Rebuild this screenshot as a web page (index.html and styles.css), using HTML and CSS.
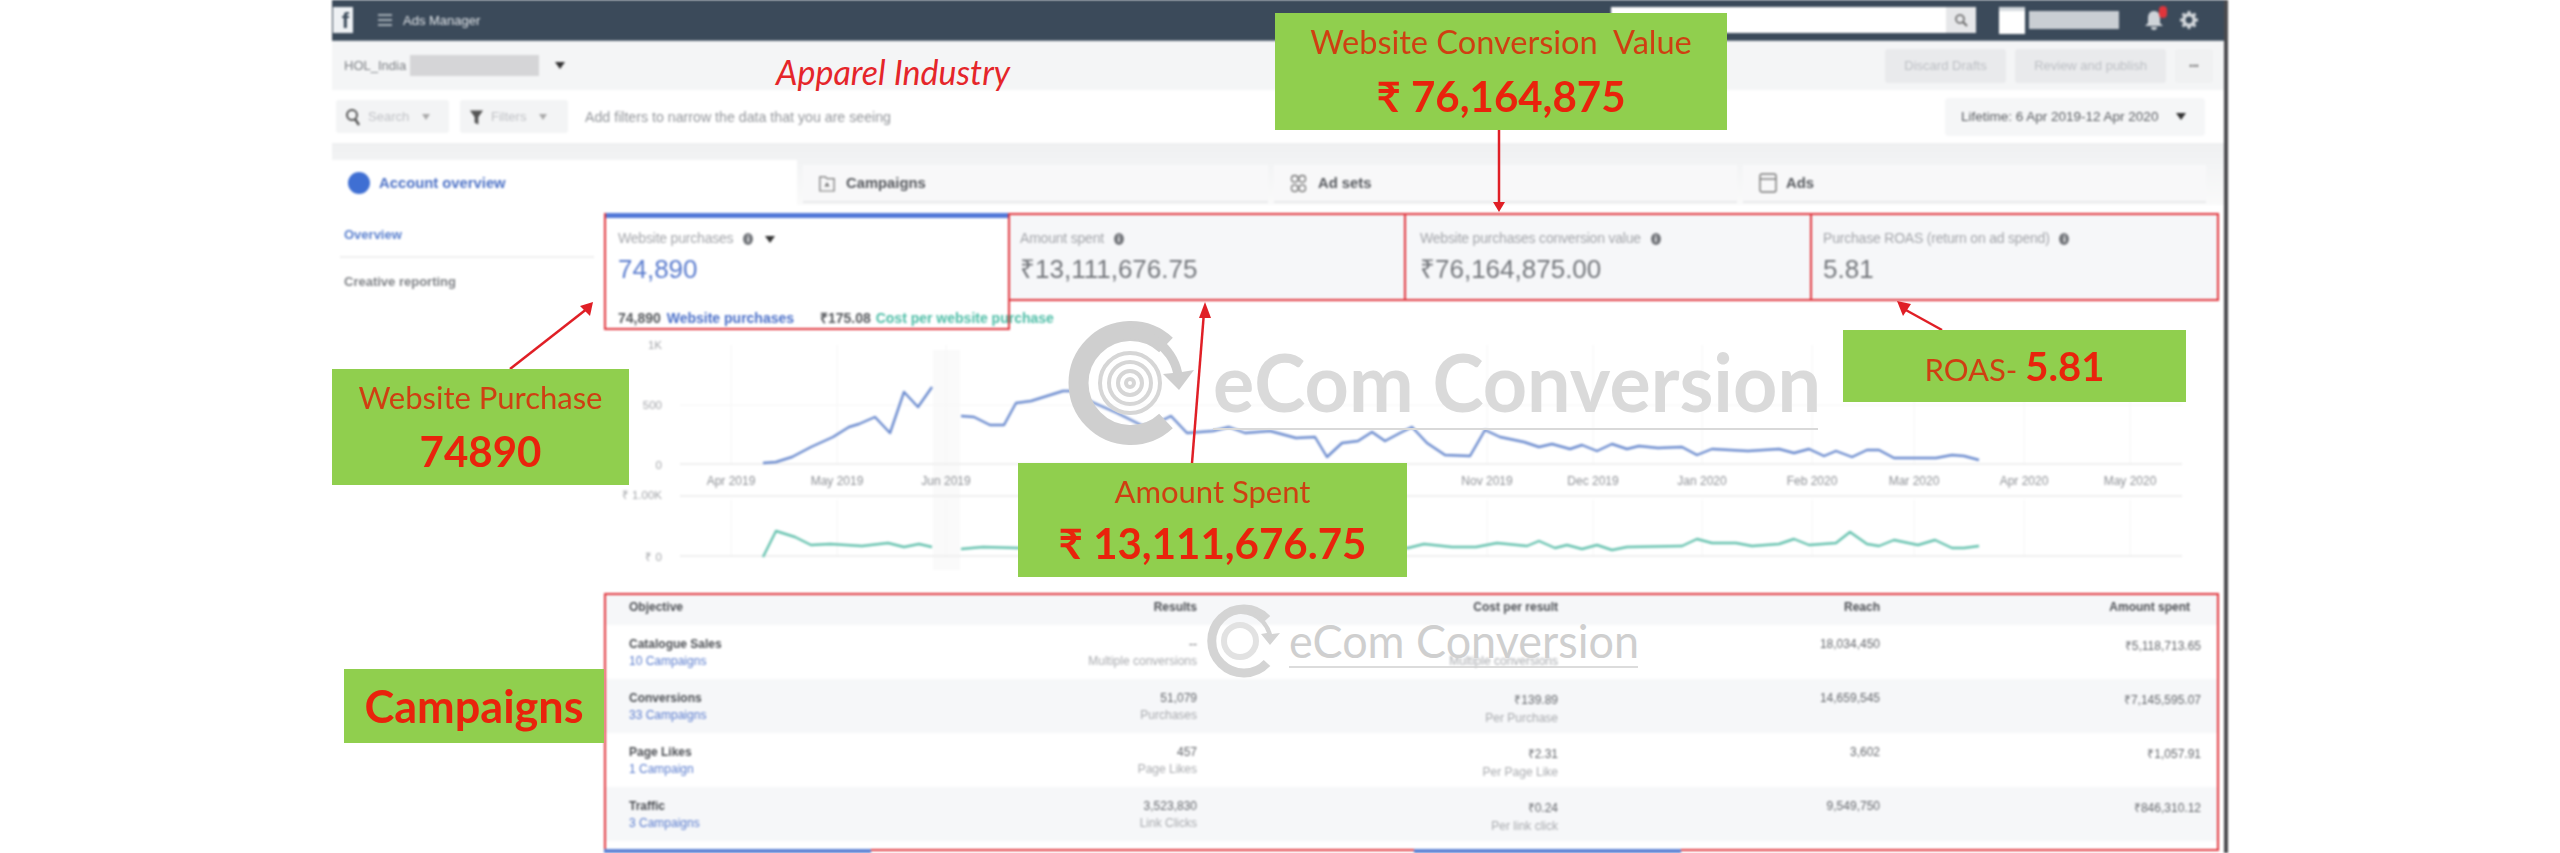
FILE: index.html
```html
<!DOCTYPE html>
<html lang="en">
<head>
  <meta charset="UTF-8">
  <title>Ads Manager - Apparel Industry</title>
  <link rel="stylesheet" href="styles.css">
</head>
<body>
  <div class="page">
    <div class="window">

      <header class="topbar">
        <div class="fb-logo">f</div>
        <svg class="burger" viewBox="0 0 14 14"><path d="M0 2h14M0 7h14M0 12h14" stroke="#c8ced4" stroke-width="1.6"/></svg>
        <span class="app-name">Ads Manager</span>
        <div class="top-search">
          <div class="top-search-btn">
            <svg viewBox="0 0 14 14" width="14" height="14"><circle cx="6" cy="6" r="4" fill="none" stroke="#666" stroke-width="1.6"/><path d="M9 9l4 4" stroke="#666" stroke-width="1.8"/></svg>
          </div>
        </div>
        <div class="top-tile"></div>
        <div class="top-name"></div>
        <div class="top-bell">
          <svg viewBox="0 0 20 22" width="20" height="22"><path d="M10 2c4 0 6 3 6 7v5l3 3H1l3-3V9c0-4 2-7 6-7zM7 18h6c0 2-1 3-3 3s-3-1-3-3z" fill="#cfd4d9"/></svg>
          <span class="bell-badge"></span>
        </div>
        <svg class="top-gear" viewBox="0 0 20 20" width="20" height="20"><circle cx="10" cy="10" r="5.2" fill="none" stroke="#d3d7db" stroke-width="3.6"/><path d="M10 1v3M10 16v3M1 10h3M16 10h3M3.6 3.6l2.2 2.2M14.2 14.2l2.2 2.2M3.6 16.4l2.2-2.2M14.2 5.8l2.2-2.2" stroke="#d3d7db" stroke-width="3"/></svg>
      </header>

      <div class="subbar">
        <span class="account">HOL_India</span>
        <span class="account-mask"></span>
        <span class="caret"></span>
        <div class="subbar-actions">
          <span class="ghost-btn discard">Discard Drafts</span>
          <span class="ghost-btn review">Review and publish</span>
          <span class="ghost-btn dots">•••</span>
        </div>
      </div>

      <div class="filterbar">
        <div class="filter-btn search-btn">
          <svg viewBox="0 0 16 18" width="16" height="18"><circle cx="7" cy="7" r="5" fill="none" stroke="#555" stroke-width="2"/><path d="M10 11l4 6" stroke="#555" stroke-width="2.4"/></svg>
          <span>Search</span><span class="caret small"></span>
        </div>
        <div class="filter-btn filters-btn">
          <svg viewBox="0 0 16 18" width="15" height="18"><path d="M1 2h14l-5 7v8l-4-2V9z" fill="#555"/></svg>
          <span>Filters</span><span class="caret small"></span>
        </div>
        <span class="filter-hint">Add filters to narrow the data that you are seeing</span>
        <div class="date-btn">Lifetime: 6 Apr 2019-12 Apr 2020 <span class="caret"></span></div>
      </div>

      <nav class="tabs">
        <div class="tab tab-active"><span class="tab-dot"></span>Account overview</div>
        <div class="tab tab-campaigns">
          <svg viewBox="0 0 18 20" width="16" height="18"><path d="M1 3h6l2 2h8v14H1z" fill="none" stroke="#777" stroke-width="1.4"/><path d="M9 9l3 5H6z" fill="#777"/></svg>
          Campaigns
        </div>
        <div class="tab tab-adsets">
          <svg viewBox="0 0 18 20" width="17" height="19" fill="none" stroke="#777" stroke-width="1.4"><circle cx="5" cy="5" r="3.5"/><circle cx="13" cy="5" r="3.5"/><circle cx="5" cy="15" r="3.5"/><circle cx="13" cy="15" r="3.5"/></svg>
          Ad sets
        </div>
        <div class="tab tab-ads">
          <svg viewBox="0 0 18 20" width="18" height="20" fill="none" stroke="#777" stroke-width="1.4"><rect x="1" y="1" width="16" height="18" rx="2"/><path d="M1 6h16"/></svg>
          Ads
        </div>
      </nav>

      <div class="main">
        <aside class="sidenav">
          <a class="nav-item nav-current">Overview</a>
          <a class="nav-item">Creative reporting</a>
        </aside>

        <section class="content">
          <div class="kpis">
            <div class="kpi kpi-first">
              <div class="kpi-label">Website purchases <span class="info">i</span> <span class="caret"></span></div>
              <div class="kpi-value">74,890</div>
              <div class="kpi-foot">
                <b>74,890</b> <b class="blue">Website purchases</b>
                <b class="foot-cost">₹175.08</b> <b class="teal">Cost per website purchase</b>
              </div>
            </div>
            <div class="kpi kpi-spent">
              <div class="kpi-label">Amount spent <span class="info">i</span></div>
              <div class="kpi-value">₹13,111,676.75</div>
            </div>
            <div class="kpi kpi-value-cell">
              <div class="kpi-label">Website purchases conversion value <span class="info">i</span></div>
              <div class="kpi-value">₹76,164,875.00</div>
            </div>
            <div class="kpi kpi-roas">
              <div class="kpi-label">Purchase ROAS (return on ad spend) <span class="info">i</span></div>
              <div class="kpi-value">5.81</div>
            </div>
          </div>

          <svg class="chart" viewBox="604 330 1606 247" width="1606" height="247">
            <rect x="933" y="350" width="27" height="220" fill="#fafafa"/>
            <g stroke="#f6f6f6" stroke-width="1">
              <path d="M731 345v119M837 345v119M946 345v119M1487 345v119M1593 345v119M1702 345v119M1812 345v119M1914 345v119M2024 345v119M2130 345v119"/>
              <path d="M731 500v56M837 500v56M946 500v56M1487 500v56M1593 500v56M1702 500v56M1812 500v56M1914 500v56M2024 500v56M2130 500v56"/>
              <path d="M680 405H2182"/>
            </g>
            <path d="M680 464H2182M680 496H2182M680 556H2182" stroke="#efefef" stroke-width="2" fill="none"/>
            <g class="axis-y">
              <text x="662" y="349">1K</text>
              <text x="662" y="409">500</text>
              <text x="662" y="469">0</text>
              <text x="662" y="499">₹ 1.00K</text>
              <text x="662" y="561">₹ 0</text>
            </g>
            <g class="axis-x">
              <text x="731" y="485">Apr 2019</text>
              <text x="837" y="485">May 2019</text>
              <text x="946" y="485">Jun 2019</text>
              <text x="1487" y="485">Nov 2019</text>
              <text x="1593" y="485">Dec 2019</text>
              <text x="1702" y="485">Jan 2020</text>
              <text x="1812" y="485">Feb 2020</text>
              <text x="1914" y="485">Mar 2020</text>
              <text x="2024" y="485">Apr 2020</text>
              <text x="2130" y="485">May 2020</text>
            </g>
            <polyline class="line-blue" points="763,463 776,462 792,457 811,447 833,437 849,427 859,424 875,417 890,433 904,392 918,407 932,387"/>
            <polyline class="line-blue" points="961,416 974,417 990,425 1004,425 1016,403 1031,401 1047,396 1063,391 1073,391 1092,402 1117,413 1143,426 1159,422 1171,416 1187,433 1213,431 1229,427 1245,433 1270,431 1296,438 1315,437 1327,457 1342,443 1358,441 1372,432 1385,441 1400,433 1412,427 1427,443 1445,455 1470,456 1485,430 1500,437 1524,442 1539,447 1552,444 1570,449 1582,445 1597,451 1612,444 1627,449 1639,446 1658,448 1682,447 1697,455 1712,449 1748,451 1779,449 1794,453 1809,449 1824,456 1836,451 1852,457 1867,450 1879,450 1894,458 1936,458 1952,455 1964,456 1979,460"/>
            <polyline class="line-teal" points="763,557 776,531 795,537 811,545 830,544 862,546 888,543 904,547 919,544 932,547"/>
            <polyline class="line-teal" points="961,549 983,547 1018,548 1408,548 1424,544 1452,547 1476,547 1497,543 1527,546 1539,541 1555,548 1567,545 1582,549 1597,545 1612,550 1627,547 1682,546 1697,539 1712,543 1736,543 1752,546 1779,544 1794,539 1809,545 1836,543 1850,532 1867,544 1879,546 1894,540 1918,545 1935,540 1952,548 1964,548 1979,546"/>
          </svg>

          <div class="campaigns">
            <div class="row row-head">
              <div class="cell-name">Objective</div>
              <div>Results</div>
              <div>Cost per result</div>
              <div>Reach</div>
              <div class="head-spent">Amount spent</div>
            </div>
            <div class="row row-white">
              <div class="cell-name"><b>Catalogue Sales</b><a>10 Campaigns</a></div>
              <div>--<small>Multiple conversions</small></div>
              <div>&nbsp;<small>Multiple conversions</small></div>
              <div>18,034,450</div>
              <div>₹5,118,713.65</div>
            </div>
            <div class="row row-grey">
              <div class="cell-name"><b>Conversions</b><a>33 Campaigns</a></div>
              <div>51,079<small>Purchases</small></div>
              <div>₹139.89<small>Per Purchase</small></div>
              <div>14,659,545</div>
              <div>₹7,145,595.07</div>
            </div>
            <div class="row row-white">
              <div class="cell-name"><b>Page Likes</b><a>1 Campaign</a></div>
              <div>457<small>Page Likes</small></div>
              <div>₹2.31<small>Per Page Like</small></div>
              <div>3,602</div>
              <div>₹1,057.91</div>
            </div>
            <div class="row row-grey">
              <div class="cell-name"><b>Traffic</b><a>3 Campaigns</a></div>
              <div>3,523,830<small>Link Clicks</small></div>
              <div>₹0.24<small>Per link click</small></div>
              <div>9,549,750</div>
              <div>₹846,310.12</div>
            </div>
          </div>
          <div class="next-tabs">
            <span class="next-on"></span>
            <span class="next-gap"></span>
            <span class="next-on"></span>
          </div>
        </section>
      </div>
    </div>

    <svg class="marks" viewBox="0 0 2560 853" width="2560" height="853">
      <g class="wm">
        <path d="M1166 345A52 52 0 1 0 1166 421" fill="none" stroke="#cfcfcf" stroke-width="20"/>
        <path d="M1120 328A56 56 0 0 1 1182 372l12-2-15 20-16-16 10-1A44 44 0 0 0 1120 340z" fill="#cfcfcf"/>
        <g fill="none" stroke="#d6d6d6" stroke-width="4">
          <circle cx="1130" cy="383" r="30"/><circle cx="1130" cy="383" r="21"/><circle cx="1130" cy="383" r="12"/><circle cx="1130" cy="383" r="4"/>
        </g>
        <text class="wm-big" x="1213" y="412" textLength="608" lengthAdjust="spacingAndGlyphs">eCom Conversion</text>
        <path d="M1213 429H1818" stroke="#d9d9d9" stroke-width="2"/>

        <path d="M1267 619A32 32 0 1 0 1267 663" fill="none" stroke="#d4d4d4" stroke-width="9"/>
        <path d="M1230 609A36 36 0 0 1 1272 634l8-1-10 12-9-11 6-1A28 28 0 0 0 1230 616z" fill="#d4d4d4"/>
        <circle cx="1240" cy="641" r="16" fill="none" stroke="#e2e2e2" stroke-width="6"/>
        <text class="wm-small" x="1289" y="658" textLength="350" lengthAdjust="spacingAndGlyphs">eCom Conversion</text>
        <path d="M1289 667H1638" stroke="#d0d0d0" stroke-width="1.5"/>
      </g>
      <g class="arrows">
        <path d="M510 369L588 308"/>
        <path d="M1192 463L1204 312"/>
        <path d="M1499 130V204"/>
        <path d="M1942 330L1904 309"/>
        <path class="tip" d="M593 302L590 316 580 306z"/>
        <path class="tip" d="M1205 302L1211 318 1199 318z"/>
        <path class="tip" d="M1499 212L1493 202 1505 202z"/>
        <path class="tip" d="M1897 301L1911 304 1903 316z"/>
      </g>
    </svg>

    <div class="industry">Apparel Industry</div>
    <div class="note note-value"><span>Website Conversion&nbsp; Value</span><strong>₹ 76,164,875</strong></div>
    <div class="note note-purchase"><span>Website Purchase</span><strong>74890</strong></div>
    <div class="note note-spent"><span>Amount Spent</span><strong>₹ 13,111,676.75</strong></div>
    <div class="note note-roas"><p><span>ROAS- </span><strong>5.81</strong></p></div>
    <div class="note note-campaigns"><strong>Campaigns</strong></div>
  </div>
</body>
</html>
```

FILE: styles.css
```css
:root {
  --bar: #3b4a5a;
  --red-line: #e0343c;
  --blue: #5a7cce;
  --teal: #4dbda6;
  --grey-cell: #f6f7f9;
  --green: #90cf4e;
  --note-text: #cf3f12;
  --note-strong: #e9230c;
}

* {
  box-sizing: border-box;
}

html,
body {
  margin: 0;
  background: #fff;
}

.page {
  position: relative;
  width: 2560px;
  height: 853px;
  overflow: hidden;
  background: #fff;
  font-family: "Liberation Sans", Arial, sans-serif;
}

.window {
  width: 1896px;
  height: 853px;
  margin-left: 332px;
  border-right: 4px solid #4a4a4e;
  overflow: hidden;
  filter: blur(0.8px);
}

.caret {
  display: inline-block;
  width: 0;
  height: 0;
  margin-left: 6px;
  border-left: 5px solid transparent;
  border-right: 5px solid transparent;
  border-top: 7px solid #333;
  vertical-align: middle;
}

.caret.small {
  border-top-color: #aaa;
  border-left-width: 4px;
  border-right-width: 4px;
  border-top-width: 6px;
}

/* top bar */
.topbar {
  display: flex;
  align-items: center;
  height: 41px;
  background: var(--bar);
  border-bottom: 1px solid #6a7683;
}

.fb-logo {
  width: 20px;
  height: 26px;
  margin-left: 1px;
  background: #eef1f4;
  color: var(--bar);
  font: bold 22px/28px "Liberation Sans", sans-serif;
  text-align: right;
  padding-right: 4px;
}

.burger {
  width: 14px;
  height: 14px;
  margin-left: 25px;
}

.app-name {
  margin-left: 11px;
  color: #dfe3e7;
  font-size: 13px;
}

.top-search {
  display: flex;
  justify-content: flex-end;
  width: 365px;
  height: 26px;
  margin-left: 1131px;
  background: #fff;
}

.top-search-btn {
  display: flex;
  align-items: center;
  justify-content: center;
  width: 30px;
  background: #e6e7e9;
}

.top-tile {
  width: 26px;
  height: 27px;
  margin-left: 23px;
  background: #fff;
  border-top: 4px solid #d5dade;
}

.top-name {
  width: 90px;
  height: 18px;
  margin-left: 4px;
  background: #c9ced3;
}

.top-bell {
  position: relative;
  margin-left: 25px;
  height: 22px;
}

.bell-badge {
  position: absolute;
  top: -3px;
  right: -3px;
  width: 8px;
  height: 12px;
  border-radius: 4px;
  background: #e0353b;
}

.top-gear {
  margin-left: 15px;
}

/* account row */
.subbar {
  display: flex;
  align-items: center;
  height: 49px;
  padding: 0 11px 0 12px;
  background: #f4f5f6;
  font-size: 13px;
  color: #7d8085;
}

.account-mask {
  width: 129px;
  height: 21px;
  margin-left: 4px;
  background: #d5d5d7;
}

.subbar .caret {
  margin-left: 16px;
}

.subbar-actions {
  display: flex;
  gap: 9px;
  margin-left: auto;
}

.ghost-btn {
  height: 34px;
  background: #e9eaec;
  border-radius: 3px;
  color: #bcbfc4;
  font-size: 13px;
  line-height: 34px;
  text-align: center;
}

.discard { width: 121px; }
.review { width: 151px; }
.dots { width: 38px; color: #777; font-size: 9px; background: #f0f1f2; }

/* filter row */
.filterbar {
  display: flex;
  align-items: center;
  height: 53px;
  padding: 0 19px 0 4px;
  background: #fff;
  font-size: 13px;
}

.filter-btn {
  display: flex;
  align-items: center;
  gap: 7px;
  height: 33px;
  padding-left: 9px;
  background: #f3f4f5;
  border-radius: 3px;
  color: #c0c2c6;
}

.search-btn { width: 113px; }
.filters-btn { width: 108px; margin-left: 11px; }

.filter-hint {
  margin-left: 17px;
  color: #93969b;
  font-size: 14.2px;
}

.date-btn {
  width: 260px;
  height: 38px;
  margin-left: auto;
  padding-left: 16px;
  background: #f5f6f7;
  border-radius: 4px;
  color: #595c61;
  font-size: 13.5px;
  line-height: 38px;
}

.date-btn .caret {
  margin-left: 14px;
}

/* tabs */
.tabs {
  display: flex;
  align-items: flex-start;
  gap: 6px;
  height: 62px;
  padding-top: 22px;
  background: linear-gradient(#eff0f1 0, #f3f4f5 22px, #fafafa 100%);
  font-size: 14.8px;
  font-weight: bold;
  color: #55585d;
}

.tab {
  display: flex;
  align-items: center;
  gap: 11px;
  width: 465px;
  height: 38px;
  padding-left: 16px;
  background: #f8f8f9;
  border-bottom: 2px solid #e9eaeb;
}

.tab-active {
  height: 45px;
  margin-top: -5px;
  background: #fff;
  border-bottom: 0;
  color: #4d72c6;
  gap: 9px;
}

.tab-dot {
  width: 22px;
  height: 22px;
  border-radius: 50%;
  background: #3f6fd3;
}

.tab-adsets { width: 463px; }
.tab-ads { width: 463px; gap: 9px; }

/* page body */
.main {
  display: grid;
  grid-template-columns: 272px 1615px;
  background: #fff;
}

.sidenav {
  padding: 22px 10px 0 8px;
  font-size: 13px;
  font-weight: bold;
  color: #808387;
}

.nav-item {
  display: block;
  padding: 0 0 0 4px;
  line-height: 16px;
}

.nav-current {
  height: 31px;
  margin-bottom: 16px;
  border-bottom: 2px solid #efefef;
  color: #5a80ce;
}

.content {
  padding-top: 8px;
}

.kpis {
  display: flex;
  align-items: flex-start;
  height: 117px;
}

.kpi {
  height: 88px;
  padding: 14px 0 0 14px;
  background: var(--grey-cell);
  border: 2px solid var(--red-line);
  border-left: 0;
}

.kpi-first {
  position: relative;
  width: 406px;
  height: 117px;
  background: #fff;
  border-left: 2px solid var(--red-line);
  border-top: 0;
  box-shadow: inset 0 5px 0 #5278d8;
  padding: 16px 0 0 12px;
}

.kpi-spent { width: 396px; padding-left: 10px; }
.kpi-value-cell { width: 406px; padding-left: 14px; }
.kpi-roas { width: 407px; padding-left: 11px; }

.kpi-label {
  height: 18px;
  color: #a3a5aa;
  font-size: 14px;
  line-height: 18px;
  letter-spacing: -0.2px;
  white-space: nowrap;
}

.kpi-label .caret {
  margin-left: 8px;
}

.info {
  display: inline-block;
  width: 10px;
  height: 12px;
  margin-left: 6px;
  border-radius: 50%;
  background: #74777c;
  color: #fff;
  font-size: 9px;
  font-weight: bold;
  line-height: 12px;
  text-align: center;
  vertical-align: 1px;
}

.kpi-value {
  margin-top: 6px;
  color: #74777c;
  font-size: 26px;
  line-height: 32px;
  white-space: nowrap;
}

.kpi-first .kpi-value {
  color: var(--blue);
}

.kpi-foot {
  position: absolute;
  left: 12px;
  top: 95px;
  font-size: 14px;
  color: #55585c;
  white-space: nowrap;
}

.kpi-foot .blue { color: #4a6fc8; margin-left: 2px; }
.kpi-foot .teal { color: var(--teal); margin-left: 1px; }
.foot-cost { margin-left: 22px; }

.chart {
  display: block;
  background: #fff;
  border-radius: 4px;
}

.axis-y text {
  fill: #a4a6aa;
  font-size: 11.5px;
  text-anchor: end;
}

.axis-x text {
  fill: #8e9196;
  font-size: 12px;
  text-anchor: middle;
}

.line-blue,
.line-teal {
  fill: none;
  stroke-width: 2.4;
  stroke-linejoin: round;
}

.line-blue { stroke: #6c8ccf; }
.line-teal { stroke: #68c3b0; }

/* campaigns table */
.campaigns {
  height: 258px;
  margin-top: 16px;
  border: 2px solid var(--red-line);
  background: #fff;
  overflow: hidden;
}

.row {
  display: grid;
  grid-template-columns: 300px 291px 361px 322px 321px;
  align-items: start;
  font-size: 12px;
  color: #64676c;
  text-align: right;
}

.row small {
  display: block;
  margin-top: 3px;
  color: #a8aaae;
  font-size: 12px;
}

.row-head {
  height: 30px;
  padding-top: 5px;
  background: var(--grey-cell);
  color: #4c4f54;
  font-weight: bold;
}

.head-spent { padding-right: 11px; }

.row-white,
.row-grey {
  height: 54px;
  padding-top: 12px;
}

.row-grey { background: var(--grey-cell); }

.cell-name {
  padding-left: 23px;
  text-align: left;
}

.cell-name b {
  display: block;
  color: #4c4f54;
}

.cell-name a {
  display: block;
  margin-top: 3px;
  color: var(--blue);
}

.next-tabs {
  display: flex;
  height: 4px;
  margin-top: -2px;
  position: relative;
}

.next-on {
  width: 267px;
  background: #5d82d4;
}

.next-gap {
  width: 543px;
}

/* annotations pasted on top of the screenshot */
.marks {
  position: absolute;
  top: 0;
  left: 0;
}

.wm-big,
.wm-small {
  font-family: Lato, "Liberation Sans", sans-serif;
  font-weight: bold;
  fill: #dadada;
}

.wm-big { font-size: 80px; }
.wm-small { font-size: 46px; font-weight: normal; fill: #cfcfcf; }

.arrows path {
  fill: none;
  stroke: #e01f26;
  stroke-width: 2.5;
}

.arrows .tip {
  fill: #e01f26;
  stroke: none;
}

.industry {
  position: absolute;
  left: 776px;
  top: 52px;
  color: #e5252a;
  font: italic 34px/40px Lato, "Liberation Sans", sans-serif;
}

.note {
  position: absolute;
  display: flex;
  flex-direction: column;
  align-items: center;
  justify-content: center;
  background: var(--green);
  color: var(--note-text);
  font-family: Lato, "Liberation Sans", sans-serif;
  font-size: 31px;
  white-space: nowrap;
  filter: blur(0.4px);
}

.note strong {
  color: var(--note-strong);
  font-weight: bold;
}

.note p {
  margin: 0;
}

.note-value {
  left: 1275px;
  top: 13px;
  width: 452px;
  height: 117px;
  gap: 10px;
  font-size: 32.5px;
}

.note-value strong { font-size: 42px; line-height: 50px; }

.note-purchase {
  left: 332px;
  top: 369px;
  width: 297px;
  height: 116px;
  gap: 10px;
}

.note-purchase strong { font-size: 42px; line-height: 50px; }

.note-spent {
  left: 1018px;
  top: 463px;
  width: 389px;
  height: 114px;
  gap: 8px;
}

.note-spent strong { font-size: 42px; line-height: 50px; }

.note-roas {
  left: 1843px;
  top: 330px;
  width: 343px;
  height: 72px;
}

.note-roas strong { font-size: 40px; }

.note-campaigns {
  left: 344px;
  top: 669px;
  width: 260px;
  height: 74px;
}

.note-campaigns strong { font-size: 45px; }
```
